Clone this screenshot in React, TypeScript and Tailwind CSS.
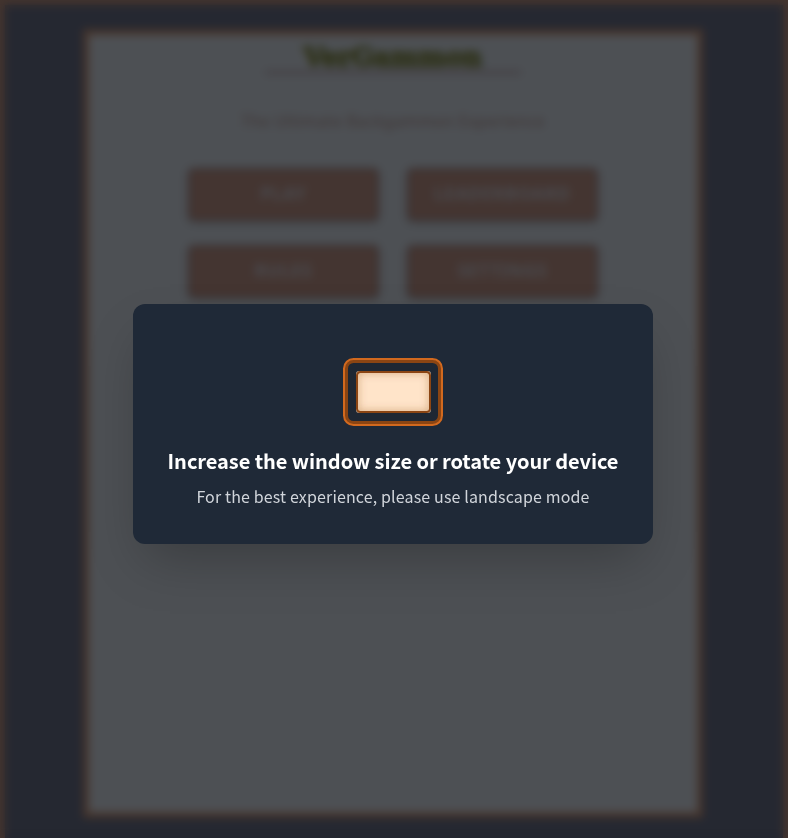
const actions = ['PLAY', 'LEADERBOARD', 'RULES', 'SETTINGS'];

function HomeScreen() {
  return (
    <div className="flex h-[844px] w-[788px] justify-center border-[5px] border-[#43342e] bg-[#252831] pr-[2px] pt-[24px]">
      <main className="flex h-[789px] w-[620px] flex-col items-center border-[6px] border-[#45342c] bg-[#4d5054]">
        <h1 className="mt-[2px] flex h-[37px] w-[256px] items-center justify-center border-b-[3px] border-[#413b3f] pt-[7px] font-['DejaVu_Serif',serif] text-[26px] font-bold text-[#30331c]">
          <span className="whitespace-nowrap [-webkit-text-stroke:2px_#30331c]">VerGammon</span>
        </h1>
        <p className="mt-[35px] h-[24px] whitespace-nowrap font-['Noto_Sans',sans-serif] text-[16px] font-medium leading-[24px] tracking-[0.2px] text-[#423a3a]">
          The Ultimate Backgammon Experience
        </p>
        <div className="mt-[35px] grid grid-cols-2 gap-x-[28px] gap-y-[24px]">
          {actions.map((label) => (
            <button
              key={label}
              className="h-[53px] w-[191px] rounded-[6px] border-2 border-[#383031] bg-[#443531] pb-[3px] font-['Noto_Sans',sans-serif] text-[18px] font-bold tracking-[0.5px] text-[#4a4a4e] shadow-[0_2px_4px_#38383c80]"
            >
              {label}
            </button>
          ))}
        </div>
      </main>
    </div>
  );
}

function DeviceIcon() {
  return (
    <svg width="100" height="68" viewBox="0 0 100 68" fill="none">
      <defs>
        <filter id="edge" x="-20%" y="-20%" width="140%" height="140%">
          <feGaussianBlur stdDeviation="4" />
        </filter>
        <clipPath id="screen">
          <rect x="15" y="15" width="71" height="38" rx="1" />
        </clipPath>
      </defs>
      <rect x="3" y="3" width="94" height="62" rx="7.5" fill="#1e2733" stroke="#8b4513" strokeWidth="4" />
      <rect x="1" y="1" width="98" height="66" rx="9.5" stroke="#d2691e" strokeWidth="2" />
      <rect x="13" y="13" width="75" height="42" rx="3" fill="#b99f8b" />
      <rect x="15" y="15" width="71" height="38" rx="1" fill="#ffe4c9" />
      <g clipPath="url(#screen)">
        <rect x="12" y="12" width="77" height="44" stroke="#8b4513" strokeOpacity="0.4" strokeWidth="6" filter="url(#edge)" />
      </g>
      <rect x="14" y="14" width="73" height="40" rx="3.5" stroke="#8b4513" strokeWidth="2" />
    </svg>
  );
}

export default function App() {
  return (
    <div className="relative h-[838px] w-[788px] overflow-hidden bg-[#252831]">
      <HomeScreen />
      <div className="absolute inset-0 flex items-start justify-center pr-[2px] pt-[304px] backdrop-blur-[4px]">
        <section
          role="dialog"
          className="flex h-[240px] w-[520px] flex-col items-center rounded-xl bg-[#1f2937] pt-[54px] font-['Noto_Sans_CJK_SC',sans-serif] shadow-[0_25px_50px_-12px_rgba(0,0,0,0.25)]"
        >
          <DeviceIcon />
          <h2 className="mt-[21px] whitespace-nowrap text-[20px] font-semibold leading-[28px] tracking-[-0.06px] text-white">
            Increase the window size or rotate your device
          </h2>
          <p className="mt-[9px] whitespace-nowrap text-[16px] leading-[24px] tracking-[0.14px] text-[#d1d5db]">
            For the best experience, please use landscape mode
          </p>
        </section>
      </div>
    </div>
  );
}
